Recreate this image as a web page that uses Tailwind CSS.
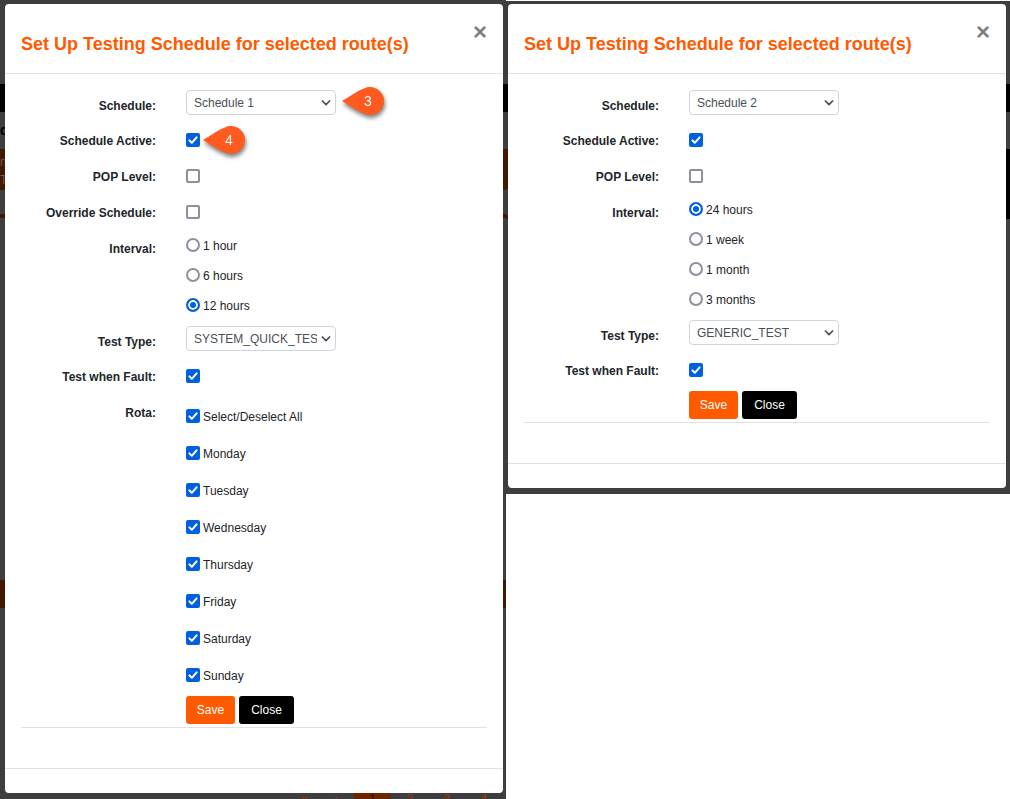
<!DOCTYPE html>
<html lang="en">
<head>
    <meta charset="UTF-8">
    <meta name="viewport" content="width=device-width, initial-scale=1.0">
    <title>Set Up Testing Schedule</title>
    <script src="https://cdn.jsdelivr.net/npm/@tailwindcss/browser@4"></script>
</head>
<body class="bg-white font-['Liberation_Sans',Arial,sans-serif] text-xs text-[#212529]">
    <!-- Shared shapes -->
    <svg class="hidden">
        <symbol id="tick" viewBox="0 0 14 14"><path d="M3.4 7.4 5.8 9.8 10.6 4.3" fill="none" stroke="#fff" stroke-width="2" stroke-linecap="round" stroke-linejoin="round"/></symbol>
        <symbol id="chevron" viewBox="0 0 10 6"><path d="M1.4 1l3.6 3.6L8.6 1" fill="none" stroke="#495057" stroke-width="1.7" stroke-linecap="round" stroke-linejoin="round"/></symbol>
        <symbol id="pin" viewBox="0 0 44 28"><path d="M0 14C8 9 15 4 22 1.4A14 14 0 1 1 22 26.6C15 24 8 19 0 14Z" fill="#ff5a1f"/></symbol>
    </svg>

    <main class="grid grid-cols-[506fr_504fr] items-start">
        <!-- Schedule 1 -->
        <section class="relative bg-[#3e3e3e] pt-1 pr-[3px] pb-1.5 pl-[5px]">
            <!-- Dimmed page behind the dialog -->
            <div class="absolute inset-0 overflow-hidden" aria-hidden="true">
                <div class="mt-[84px] h-7 bg-black"></div>
                <div class="h-[37px] text-sm leading-[37px] font-bold text-black">d</div>
                <div class="h-[41px] bg-[#421800] pt-1 leading-[18px] text-[#6b5a50]">
                    <div>n</div>
                    <div>T</div>
                </div>
                <div class="mt-6 h-1 bg-[#421800]"></div>
                <div class="mt-[362px] h-7 bg-[#421800]"></div>
                <div class="absolute bottom-0 left-[290px] flex h-1.5 text-center leading-3 text-[#a03800]">
                    <span class="w-7">«</span>
                    <span class="w-9">‹</span>
                    <span class="w-[37px] bg-[#6b2600] text-[#2b1000]">1</span>
                    <span class="w-[37px]">2</span>
                    <span class="w-[37px]">3</span>
                    <span class="w-[37px]">4</span>
                </div>
            </div>

            <form class="relative rounded bg-white">
                <header class="flex h-[70px] items-start justify-between border-b border-[#dee2e6] px-4 pt-4">
                    <h2 class="pt-3 text-lg leading-6 font-bold text-[#ff5a00]">Set Up Testing Schedule for selected route(s)</h2>
                    <button type="button" aria-label="Close dialog" class="text-2xl leading-6 font-bold text-[#7f7f7f]">×</button>
                </header>

                <div class="px-4 pt-[13px] pb-10">
                    <div class="grid grid-cols-[135px_1fr] gap-x-[30px] border-b border-[#dee2e6] pb-[3px]">
                        <label for="schedule1" class="pt-[9px] text-right leading-5 font-bold">Schedule:</label>
                        <div class="h-[35px] pt-[3px]">
                            <div class="relative w-[150px]">
                                <select id="schedule1" class="block h-[25px] w-full appearance-none rounded border border-[#ced4da] bg-white pr-[18px] pl-[7px] text-[#495057]">
                                    <option>Schedule 1</option>
                                    <option>Schedule 2</option>
                                </select>
                                <svg class="pointer-events-none absolute top-[10px] right-[5px] h-1.5 w-[10px]"><use href="#chevron"/></svg>
                                <div class="absolute top-[-3px] left-full ml-1.5 h-7 w-11 drop-shadow-[1px_3px_2px_rgba(0,0,0,0.5)]">
                                    <svg class="absolute inset-0 h-7 w-11"><use href="#pin"/></svg>
                                    <span class="absolute inset-0 pl-2 text-center text-sm leading-7 text-white">3</span>
                                </div>
                            </div>
                        </div>

                        <label for="active1" class="pt-[9px] text-right leading-5 font-bold">Schedule Active:</label>
                        <div class="flex h-9 items-center">
                            <div class="relative">
                                <input id="active1" type="checkbox" checked class="block size-[14px] appearance-none rounded-xs border-2 border-[#8f8f9d] checked:border-[#0060df] checked:bg-[#0060df]">
                                <svg class="pointer-events-none absolute inset-0 size-[14px]"><use href="#tick"/></svg>
                                <div class="absolute top-[-7px] left-full ml-[3px] h-7 w-11 drop-shadow-[1px_3px_2px_rgba(0,0,0,0.5)]">
                                    <svg class="absolute inset-0 h-7 w-11"><use href="#pin"/></svg>
                                    <span class="absolute inset-0 pl-2 text-center text-sm leading-7 text-white">4</span>
                                </div>
                            </div>
                        </div>

                        <label for="pop1" class="pt-[9px] text-right leading-5 font-bold">POP Level:</label>
                        <div class="flex h-9 items-center">
                            <input id="pop1" type="checkbox" class="size-[14px] appearance-none rounded-xs border-2 border-[#8f8f9d] checked:bg-[#0060df]">
                        </div>

                        <label for="override1" class="pt-[9px] text-right leading-5 font-bold">Override Schedule:</label>
                        <div class="flex h-9 items-center">
                            <input id="override1" type="checkbox" class="size-[14px] appearance-none rounded-xs border-2 border-[#8f8f9d] checked:bg-[#0060df]">
                        </div>

                        <span id="interval1" class="pt-[9px] text-right leading-5 font-bold">Interval:</span>
                        <div role="radiogroup" aria-labelledby="interval1" class="pb-[3px]">
                            <label class="flex h-[30px] items-center gap-[3px]">
                                <input type="radio" name="interval1" class="size-[14px] appearance-none rounded-full border-2 border-[#8f8f9d] checked:border-[#0060df] checked:bg-[#0060df] checked:shadow-[inset_0_0_0_2px_#fff]">
                                <span class="pt-px">1 hour</span>
                            </label>
                            <label class="flex h-[30px] items-center gap-[3px]">
                                <input type="radio" name="interval1" class="size-[14px] appearance-none rounded-full border-2 border-[#8f8f9d] checked:border-[#0060df] checked:bg-[#0060df] checked:shadow-[inset_0_0_0_2px_#fff]">
                                <span class="pt-px">6 hours</span>
                            </label>
                            <label class="flex h-[30px] items-center gap-[3px]">
                                <input type="radio" name="interval1" checked class="size-[14px] appearance-none rounded-full border-2 border-[#8f8f9d] checked:border-[#0060df] checked:bg-[#0060df] checked:shadow-[inset_0_0_0_2px_#fff]">
                                <span class="pt-px">12 hours</span>
                            </label>
                        </div>

                        <label for="type1" class="pt-[9px] text-right leading-5 font-bold">Test Type:</label>
                        <div class="h-[35px] pt-[3px]">
                            <div class="relative w-[150px]">
                                <select id="type1" class="block h-[25px] w-full appearance-none rounded border border-[#ced4da] bg-white pr-[18px] pl-[7px] text-[#495057]">
                                    <option>SYSTEM_QUICK_TEST</option>
                                    <option>GENERIC_TEST</option>
                                </select>
                                <svg class="pointer-events-none absolute top-[10px] right-[5px] h-1.5 w-[10px]"><use href="#chevron"/></svg>
                            </div>
                        </div>

                        <label for="fault1" class="pt-[9px] text-right leading-5 font-bold">Test when Fault:</label>
                        <div class="flex h-9 items-center">
                            <div class="relative">
                                <input id="fault1" type="checkbox" checked class="block size-[14px] appearance-none rounded-xs border-2 border-[#8f8f9d] checked:border-[#0060df] checked:bg-[#0060df]">
                                <svg class="pointer-events-none absolute inset-0 size-[14px]"><use href="#tick"/></svg>
                            </div>
                        </div>

                        <span id="rota" class="pt-[9px] text-right leading-5 font-bold">Rota:</span>
                        <div role="group" aria-labelledby="rota" class="pt-[3px]">
                            <label class="relative flex h-[37px] items-center gap-[3px]">
                                <input type="checkbox" checked class="size-[14px] appearance-none rounded-xs border-2 border-[#8f8f9d] checked:border-[#0060df] checked:bg-[#0060df]">
                                <svg class="pointer-events-none absolute left-0 size-[14px]"><use href="#tick"/></svg>
                                <span class="pt-0.5">Select/Deselect All</span>
                            </label>
                            <label class="relative flex h-[37px] items-center gap-[3px]">
                                <input type="checkbox" checked class="size-[14px] appearance-none rounded-xs border-2 border-[#8f8f9d] checked:border-[#0060df] checked:bg-[#0060df]">
                                <svg class="pointer-events-none absolute left-0 size-[14px]"><use href="#tick"/></svg>
                                <span class="pt-0.5">Monday</span>
                            </label>
                            <label class="relative flex h-[37px] items-center gap-[3px]">
                                <input type="checkbox" checked class="size-[14px] appearance-none rounded-xs border-2 border-[#8f8f9d] checked:border-[#0060df] checked:bg-[#0060df]">
                                <svg class="pointer-events-none absolute left-0 size-[14px]"><use href="#tick"/></svg>
                                <span class="pt-0.5">Tuesday</span>
                            </label>
                            <label class="relative flex h-[37px] items-center gap-[3px]">
                                <input type="checkbox" checked class="size-[14px] appearance-none rounded-xs border-2 border-[#8f8f9d] checked:border-[#0060df] checked:bg-[#0060df]">
                                <svg class="pointer-events-none absolute left-0 size-[14px]"><use href="#tick"/></svg>
                                <span class="pt-0.5">Wednesday</span>
                            </label>
                            <label class="relative flex h-[37px] items-center gap-[3px]">
                                <input type="checkbox" checked class="size-[14px] appearance-none rounded-xs border-2 border-[#8f8f9d] checked:border-[#0060df] checked:bg-[#0060df]">
                                <svg class="pointer-events-none absolute left-0 size-[14px]"><use href="#tick"/></svg>
                                <span class="pt-0.5">Thursday</span>
                            </label>
                            <label class="relative flex h-[37px] items-center gap-[3px]">
                                <input type="checkbox" checked class="size-[14px] appearance-none rounded-xs border-2 border-[#8f8f9d] checked:border-[#0060df] checked:bg-[#0060df]">
                                <svg class="pointer-events-none absolute left-0 size-[14px]"><use href="#tick"/></svg>
                                <span class="pt-0.5">Friday</span>
                            </label>
                            <label class="relative flex h-[37px] items-center gap-[3px]">
                                <input type="checkbox" checked class="size-[14px] appearance-none rounded-xs border-2 border-[#8f8f9d] checked:border-[#0060df] checked:bg-[#0060df]">
                                <svg class="pointer-events-none absolute left-0 size-[14px]"><use href="#tick"/></svg>
                                <span class="pt-0.5">Saturday</span>
                            </label>
                            <label class="relative flex h-[37px] items-center gap-[3px]">
                                <input type="checkbox" checked class="size-[14px] appearance-none rounded-xs border-2 border-[#8f8f9d] checked:border-[#0060df] checked:bg-[#0060df]">
                                <svg class="pointer-events-none absolute left-0 size-[14px]"><use href="#tick"/></svg>
                                <span class="pt-0.5">Sunday</span>
                            </label>
                        </div>

                        <div class="col-start-2 flex gap-1 pt-[3px]">
                            <button type="submit" class="h-7 w-[49px] rounded-[3px] bg-[#ff5a00] text-white">Save</button>
                            <button type="button" class="h-7 w-[55px] rounded-[3px] bg-black text-white">Close</button>
                        </div>
                    </div>
                </div>
                <footer class="h-[25px] border-t border-[#dee2e6]"></footer>
            </form>
        </section>

        <!-- Schedule 2 -->
        <section class="relative mt-px bg-[#3e3e3e] pt-[3px] pr-1 pb-1.5 pl-0.5">
            <div class="absolute inset-0 overflow-hidden" aria-hidden="true">
                <div class="mt-[83px] h-7 bg-black"></div>
                <div class="mt-[37px] flex h-[70px] justify-between">
                    <div class="w-0.5 border-b-4 border-[#421800] bg-linear-to-b from-[#421800] from-60% to-[#3e3e3e] to-60%"></div>
                    <div class="w-1 bg-black"></div>
                </div>
            </div>

            <form class="relative rounded bg-white">
                <header class="flex h-[70px] items-start justify-between border-b border-[#dee2e6] px-4 pt-4">
                    <h2 class="pt-3 text-lg leading-6 font-bold text-[#ff5a00]">Set Up Testing Schedule for selected route(s)</h2>
                    <button type="button" aria-label="Close dialog" class="text-2xl leading-6 font-bold text-[#7f7f7f]">×</button>
                </header>

                <div class="px-4 pt-[13px] pb-10">
                    <div class="grid grid-cols-[135px_1fr] gap-x-[30px] border-b border-[#dee2e6] pb-[3px]">
                        <label for="schedule2" class="pt-[9px] text-right leading-5 font-bold">Schedule:</label>
                        <div class="h-[35px] pt-[3px]">
                            <div class="relative w-[150px]">
                                <select id="schedule2" class="block h-[25px] w-full appearance-none rounded border border-[#ced4da] bg-white pr-[18px] pl-[7px] text-[#495057]">
                                    <option>Schedule 2</option>
                                    <option>Schedule 1</option>
                                </select>
                                <svg class="pointer-events-none absolute top-[10px] right-[5px] h-1.5 w-[10px]"><use href="#chevron"/></svg>
                            </div>
                        </div>

                        <label for="active2" class="pt-[9px] text-right leading-5 font-bold">Schedule Active:</label>
                        <div class="flex h-9 items-center">
                            <div class="relative">
                                <input id="active2" type="checkbox" checked class="block size-[14px] appearance-none rounded-xs border-2 border-[#8f8f9d] checked:border-[#0060df] checked:bg-[#0060df]">
                                <svg class="pointer-events-none absolute inset-0 size-[14px]"><use href="#tick"/></svg>
                            </div>
                        </div>

                        <label for="pop2" class="pt-[9px] text-right leading-5 font-bold">POP Level:</label>
                        <div class="flex h-9 items-center">
                            <input id="pop2" type="checkbox" class="size-[14px] appearance-none rounded-xs border-2 border-[#8f8f9d] checked:bg-[#0060df]">
                        </div>

                        <span id="interval2" class="pt-[9px] text-right leading-5 font-bold">Interval:</span>
                        <div role="radiogroup" aria-labelledby="interval2" class="pb-[3px]">
                            <label class="flex h-[30px] items-center gap-[3px]">
                                <input type="radio" name="interval2" checked class="size-[14px] appearance-none rounded-full border-2 border-[#8f8f9d] checked:border-[#0060df] checked:bg-[#0060df] checked:shadow-[inset_0_0_0_2px_#fff]">
                                <span class="pt-px">24 hours</span>
                            </label>
                            <label class="flex h-[30px] items-center gap-[3px]">
                                <input type="radio" name="interval2" class="size-[14px] appearance-none rounded-full border-2 border-[#8f8f9d] checked:border-[#0060df] checked:bg-[#0060df] checked:shadow-[inset_0_0_0_2px_#fff]">
                                <span class="pt-px">1 week</span>
                            </label>
                            <label class="flex h-[30px] items-center gap-[3px]">
                                <input type="radio" name="interval2" class="size-[14px] appearance-none rounded-full border-2 border-[#8f8f9d] checked:border-[#0060df] checked:bg-[#0060df] checked:shadow-[inset_0_0_0_2px_#fff]">
                                <span class="pt-px">1 month</span>
                            </label>
                            <label class="flex h-[30px] items-center gap-[3px]">
                                <input type="radio" name="interval2" class="size-[14px] appearance-none rounded-full border-2 border-[#8f8f9d] checked:border-[#0060df] checked:bg-[#0060df] checked:shadow-[inset_0_0_0_2px_#fff]">
                                <span class="pt-px">3 months</span>
                            </label>
                        </div>

                        <label for="type2" class="pt-[9px] text-right leading-5 font-bold">Test Type:</label>
                        <div class="h-[35px] pt-[3px]">
                            <div class="relative w-[150px]">
                                <select id="type2" class="block h-[25px] w-full appearance-none rounded border border-[#ced4da] bg-white pr-[18px] pl-[7px] text-[#495057]">
                                    <option>GENERIC_TEST</option>
                                    <option>SYSTEM_QUICK_TEST</option>
                                </select>
                                <svg class="pointer-events-none absolute top-[10px] right-[5px] h-1.5 w-[10px]"><use href="#chevron"/></svg>
                            </div>
                        </div>

                        <label for="fault2" class="pt-[9px] text-right leading-5 font-bold">Test when Fault:</label>
                        <div class="flex h-9 items-center">
                            <div class="relative">
                                <input id="fault2" type="checkbox" checked class="block size-[14px] appearance-none rounded-xs border-2 border-[#8f8f9d] checked:border-[#0060df] checked:bg-[#0060df]">
                                <svg class="pointer-events-none absolute inset-0 size-[14px]"><use href="#tick"/></svg>
                            </div>
                        </div>

                        <div class="col-start-2 flex gap-1 pt-[3px]">
                            <button type="submit" class="h-7 w-[49px] rounded-[3px] bg-[#ff5a00] text-white">Save</button>
                            <button type="button" class="h-7 w-[55px] rounded-[3px] bg-black text-white">Close</button>
                        </div>
                    </div>
                </div>
                <footer class="h-[25px] border-t border-[#dee2e6]"></footer>
            </form>
        </section>
    </main>
</body>
</html>
